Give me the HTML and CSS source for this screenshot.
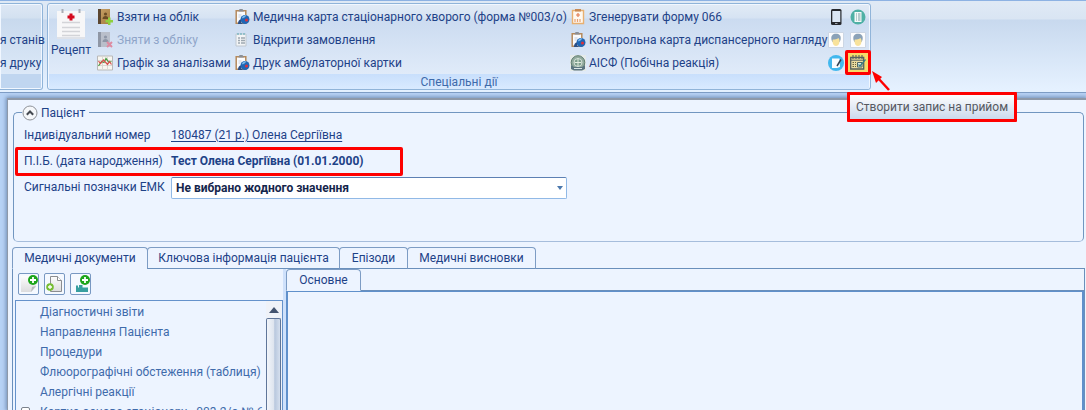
FILE: index.html
```html
<!DOCTYPE html>
<html lang="uk">
<head>
<meta charset="utf-8">
<title>Пацієнт</title>
<link rel="stylesheet" href="styles.css">
</head>
<body>
<svg class="defs" aria-hidden="true">
  <defs>
    <linearGradient id="paper" x1="0" y1="0" x2="0" y2="1"><stop offset="0" stop-color="#fdfdfd"/><stop offset="1" stop-color="#dcdcde"/></linearGradient>
    <linearGradient id="leather" x1="0" y1="0" x2="1" y2="1"><stop offset="0" stop-color="#c9a268"/><stop offset="1" stop-color="#a57b3f"/></linearGradient>
  </defs>
  <symbol id="i-clip" viewBox="0 0 16 16">
    <path d="M2.200 1.800h9.600v12.400H2.200z" fill="#fafbfd" stroke="#b58a5c" stroke-width="1.500"/>
    <path d="M4.500 2.500 5.500 0h3l1.500 2.500z" fill="#8b8f96"/>
    <path d="M4.500 6h3M4.500 8h2" stroke="#c5cede"/>
    <circle cx="11" cy="10.500" r="4.500" fill="#1f66b5"/>
    <path d="M8 8.500c1-2 3-2.500 4.500-2L10.500 8.500 8.500 9.500z" fill="#7db9ea"/>
    <path d="M4 15c0-3 1-4.500 3-4.500v3L9 15z" fill="#2b4f86"/>
    <circle cx="12.500" cy="11" r="1.600" fill="#d8323c"/>
  </symbol>
  <symbol id="i-face" viewBox="0 0 16 16">
    <path d="M.5.5h15v15H.5z" fill="#fdfdfe" stroke="#ccd6e4"/>
    <path d="M3.500 8C2.500 3.500 5 1.800 8 1.800S13.500 3.500 12.500 8L11.500 10h-7z" fill="#8ba2b8"/>
    <path d="M5 7.500c2 0 4-.5 5.500-1.500l1 2c.3 3-1 6-3.500 6s-3.700-3-3.500-6z" fill="#f8e29b"/>
  </symbol>
</svg>

<header class="ribbon">
  <section class="group group-cut">
    <div class="group-body">
      <button class="cmd"><span>я станів</span></button>
      <button class="cmd"><span>я друку</span></button>
    </div>
    <div class="group-title"></div>
  </section>

  <section class="group group-special">
    <div class="group-body">
      <button class="big">
        <svg viewBox="0 0 28 30"><path d="M0 2h28v28H0z" fill="#dfe2e8"/><path d="M0 2h28v26H0z" fill="#f7f7f8"/><path d="M5.500 0v4M22.500 0v4" stroke="#a9adb4" stroke-width="2"/><path d="M12.500 4.500h3v2h2v3h-2v2h-3v-2h-2v-3h2z" fill="#d4081c"/><path d="M5 13.500h18M5 18.500h18M5 22.500h18M5 26.500h18" stroke="#d3d4d8" stroke-width="1.500"/></svg>
        <span>Рецепт</span>
      </button>
      <div class="col col-a">
        <button class="cmd"><svg viewBox="0 0 16 16"><path d="M1 0h12v15H1z" fill="url(#leather)"/><path d="M1 0h3v15H1z" fill="#5b4630"/><circle cx="8.500" cy="5" r="1.600" fill="#6b4c25"/><path d="M5.500 10c0-4 6-4 6 0z" fill="#6b4c25"/><path d="M11 8.500h2.500V11H16v2.500h-2.500V16H11v-2.500H8.500V11H11z" fill="#8ed03e"/></svg><span>Взяти на облік</span></button>
        <button class="cmd" disabled><svg viewBox="0 0 16 16"><path d="M1 0h12v15H1z" fill="#b9bfca"/><path d="M1 0h3v15H1z" fill="#8f97a5"/><circle cx="8.500" cy="5" r="1.600" fill="#8e97a7"/><path d="M5.500 10c0-4 6-4 6 0z" fill="#8e97a7"/><path d="m10 10 5 5m0-5-5 5" stroke="#dd8ba1" stroke-width="2"/></svg><span>Зняти з обліку</span></button>
        <button class="cmd"><svg viewBox="0 0 16 16"><path d="M.5 1h15v14H.5z" fill="#f8f6f0" stroke="#b9b9b9"/><path d="M1 5.500h14M1 10.500h14M5.500 1v14M10.500 1v14" stroke="#dad9d3"/><path d="m1.500 11 3-4.500 2.500 1 2-4 3 4 2.500-1" fill="none" stroke="#4a9c43" stroke-width="1.200"/><path d="m1.500 6 2 2.500L6.500 5l4 4.500 2-3 2 3" fill="none" stroke="#d9534f" stroke-width="1.200"/></svg><span>Графік за аналізами</span></button>
      </div>
      <div class="col col-b">
        <button class="cmd"><svg><use href="#i-clip"/></svg><span>Медична карта стаціонарного хворого (форма №003/о)</span></button>
        <button class="cmd"><svg viewBox="0 0 16 16"><path d="M2 4V2h10v12H2z" fill="#f2f4f6" stroke="#c0c8d0"/><path d="M4 1v2M7 1v2M10 1v2" stroke="#55a6b3"/><path d="M4 6h2M7 6h4M4 8.500h2M7 8.500h4M4 11h2M7 11h4" stroke="#9ea8b1" stroke-width="1.300"/></svg><span>Відкрити замовлення</span></button>
        <button class="cmd"><svg><use href="#i-clip"/></svg><span>Друк амбулаторної картки</span></button>
      </div>
      <div class="col col-c">
        <button class="cmd"><svg viewBox="0 0 16 16"><path d="M2.500 1.500h11v13h-11z" fill="#fff9f0" stroke="#e8b070" stroke-width="1.400"/><path d="M5 0h6v2.500H5z" fill="#c98a54"/><path d="M8 4v4M6 6h4" stroke="#e27d55" stroke-width="1.200"/><path d="M5 10v3M7.500 10v3M10 10v3" stroke="#e7a074" stroke-width="1.200"/></svg><span>Згенерувати форму 066</span></button>
        <button class="cmd"><svg><use href="#i-clip"/></svg><span>Контрольна карта диспансерного нагляду</span></button>
        <button class="cmd"><svg viewBox="0 0 16 16"><path d="M0 0h16v16H0z" fill="#e5ebe9"/><circle cx="8" cy="7.500" r="6.800" fill="#91aa9c" stroke="#607c70"/><circle cx="8" cy="7.500" r="4" fill="#7d9e8c" stroke="#d4e0d8"/><path d="M8 3.500v8M4.500 7.500h7" stroke="#e2ecdf"/><path d="m1 10 3 2h8l3-2v4l-3 1.500H4L1 14z" fill="#5b7580"/><path d="M4 13.500h8" stroke="#dbe6e5"/></svg><span>АІСФ (Побічна реакція)</span></button>
      </div>
      <div class="icons">
        <button class="tool" aria-label="Телефон"><svg viewBox="0 0 16 16"><rect x="3" y="0" width="10.500" height="16" rx="1.500" fill="#26282d"/><path d="M4.300 2h8v11h-8z" fill="#dbe6f4"/><path d="M7 14.500h2.500" stroke="#9ca3ad"/></svg></button>
        <button class="tool" aria-label="Список"><svg viewBox="0 0 16 16"><circle cx="8" cy="8" r="7.500" fill="#4fb0a5"/><path d="M4.500 3h7v10h-7z" fill="#f4faf9"/><path d="M6 5h1M8 5h2.500M6 7h1M8 7h2.500M6 9h1M8 9h2.500M6 11h1M8 11h2.500" stroke="#789da3"/></svg></button>
        <button class="tool" aria-label="Пацієнт"><svg><use href="#i-face"/></svg></button>
        <button class="tool" aria-label="Пацієнтка"><svg><use href="#i-face"/></svg></button>
        <button class="tool" aria-label="Редагувати"><svg viewBox="0 0 16 16"><circle cx="8" cy="8" r="8" fill="#42b8ee"/><path d="M4 3.500h7.500L12 12l-3 1H4z" fill="#fbfcfe"/><path d="m13 4.500-4 6.500" stroke="#344252" stroke-width="1.500"/></svg></button>
        <button class="tool tool-hot" aria-label="Створити запис на прийом"><svg viewBox="0 0 16 16"><path d="M.7 2.500h13v11.500H.7z" fill="#ecdca0" stroke="#54605f" stroke-width="1.300"/><path d="M1 5.200h13" stroke="#54605f"/><path d="M3 0v4M6 0v4M9 0v4M12 0v4" stroke="#59615e" stroke-width="1.100"/><path d="M2.500 7.500h1.500M5 7.500h1M2.500 9.500h1.500M5 9.500h1M2.500 11.500h1.500M5 11.500h1" stroke="#66633f" stroke-width="1.200"/><path d="M7.500 7.500h4.500v4.500H7.500z" fill="#dff0e8" stroke="#4e6666"/><path d="m8.500 9.500 1.500 1.500 5.500-6.500" fill="none" stroke="#397d84" stroke-width="1.200"/></svg>
          <span class="mark mark-tool"></span>
          <svg class="arrow" viewBox="0 0 20 20"><path d="M18 19 7 7" stroke="#fe0000" stroke-width="2.500"/><path d="M1 0 11 6 5 12z" fill="#fe0000"/></svg>
          <span class="tip" role="tooltip">Створити запис на прийом</span>
        </button>
      </div>
    </div>
    <div class="group-title">Спеціальні дії</div>
  </section>
</header>

<main class="window">
  <section class="patient">
    <div class="legend">
      <button class="fold" aria-label="Згорнути"><svg viewBox="0 0 16 16"><circle cx="8" cy="8" r="7" fill="#f5f7fa" stroke="#8f9399"/><path d="m4.800 9.800 3.200-3.300 3.200 3.300" fill="none" stroke="#444950" stroke-width="2"/></svg></button>
      <span>Пацієнт</span>
    </div>
    <div class="rows">
      <span>Індивідуальний номер</span>
      <a href="#patient">180487 (21 р.) Олена Сергіївна</a>
      <span>П.І.Б. (дата народження)</span>
      <strong>Тест Олена Сергіївна (01.01.2000)<i class="mark mark-name"></i></strong>
      <label for="signals">Сигнальні позначки ЕМК</label>
      <div class="pick"><select id="signals"><option>Не вибрано жодного значення</option></select></div>
    </div>
  </section>

  <nav class="tabs">
    <button class="tab tab-on tab-docs">Медичні документи</button>
    <button class="tab tab-key">Ключова інформація пацієнта</button>
    <button class="tab tab-ep">Епізоди</button>
    <button class="tab tab-con">Медичні висновки</button>
  </nav>

  <div class="split">
    <aside class="left">
      <div class="toolbar">
        <button aria-label="Новий документ"><svg viewBox="0 0 18 18"><path d="M1 1h15v11l-5 5H1z" fill="url(#paper)"/><path d="m11 17 1-5 4-1z" fill="#b7babd"/><circle cx="13" cy="5" r="5" fill="#1da51b"/><path d="M13 2v6M10 5h6" stroke="#fff" stroke-width="1.800"/></svg></button>
        <button aria-label="Додати файл"><svg viewBox="0 0 18 18"><path d="M4.500 1.500h7l4 4v11h-11z" fill="url(#paper)" stroke="#8b8d90"/><path d="M11.500 1.500v4h4" fill="#fff" stroke="#8b8d90"/><circle cx="4" cy="12" r="3.800" fill="#76bd33"/><path d="M4 10v4M2 12h4" stroke="#fff" stroke-width="1.300"/></svg></button>
        <button aria-label="Додати госпіталізацію"><svg viewBox="0 0 18 18"><path d="M4 10.500h2v2h10v4.500H4z" fill="#379fa0"/><path d="M7 10h3.500v3H7z" fill="#379fa0"/><circle cx="13" cy="5" r="5" fill="#1da51b"/><path d="M13 2v6M10 5h6" stroke="#fff" stroke-width="1.800"/></svg></button>
      </div>
      <div class="listbox">
        <ul class="tree">
          <li>Діагностичні звіти</li>
          <li>Направлення Пацієнта</li>
          <li>Процедури</li>
          <li>Флюорографічні обстеження (таблиця)</li>
          <li>Алергічні реакції</li>
          <li><button class="expand" aria-label="Розгорнути"></button>Картка-основа стаціонару - 003-2/о № 6</li>
        </ul>
        <div class="scroll"><button class="up" aria-label="Вгору"><svg viewBox="0 0 10 6"><path d="m0 6 5-6 5 6z" fill="#43536f"/></svg></button><div class="thumb"></div></div>
      </div>
    </aside>
    <section class="right">
      <nav class="subtabs"><button class="tab tab-on tab-main">Основне</button></nav>
      <div class="canvas"></div>
    </section>
  </div>
</main>
</body>
</html>
```

FILE: styles.css
```css
* { box-sizing: border-box; }

body {
  margin: 0;
  height: 100vh;
  overflow: hidden;
  display: flex;
  flex-direction: column;
  background: #b7d2f5;
  color: #1e4287;
  font: 12px/20px Roboto, "Noto Sans", sans-serif;
}

button { margin: 0; padding: 0; border: 0; background: none; color: inherit; font: inherit; }
.defs { position: absolute; width: 0; height: 0; }

/* Ribbon */
.ribbon {
  flex: none;
  display: flex;
  gap: 4px;
  height: 93px;
  padding-top: 2px;
  border-top: 1px solid #8db2e3;
  border-bottom: 1px solid #7e9cc5;
  background: linear-gradient(#dfe9f5 0 3px, #d9e5f3 18px, #c8d9ee 19px, #e5f1ff 88px);
}
.group {
  display: flex;
  flex-direction: column;
  height: 87px;
  border: 1px solid #90b4d9;
  border-radius: 3px;
  box-shadow: inset 0 0 0 1px #f1f7ff;
  background: linear-gradient(#dee8f5, #d3e1f0 14px, #c8d9ed 15px, #dce9f8 70px);
}
.group-cut { width: 43px; border-left: 0; border-radius: 0 3px 3px 0; }
.group-cut .group-body { flex-direction: column; padding-top: 24px; }
.group-special { width: 824px; background: linear-gradient(#e2ebf6, #d6e3f3 14px, #cbdbf0 15px, #e0ebf9 70px); }
.group-body { display: flex; height: 70px; }
.group-title {
  height: 15px;
  margin: 0 1px 1px;
  line-height: 17px;
  text-align: center;
  color: #3e6aaa;
  background: linear-gradient(#c8dffc, #d9eaff);
}
.group-cut .group-title { background: #c0d6f0; }

.cmd { display: flex; align-items: center; gap: 4px; height: 23px; white-space: nowrap; }
.cmd svg { width: 16px; height: 16px; flex: none; }
.cmd:disabled { color: #8fa5c9; }
.big { display: flex; flex-direction: column; align-items: center; width: 40px; padding-top: 5px; margin-left: 3px; }
.big svg { width: 28px; height: 30px; }
.big span { line-height: 22px; }
.col { padding-top: 1px; }
.col-a { width: 137px; margin-left: 6px; }
.col-b { width: 336px; }
.col-c { width: 258px; }
.col-b .cmd, .col-c .cmd { gap: 3px; }
.icons { display: grid; grid-template-columns: 22px 22px; grid-auto-rows: 23px; margin-left: -2px; padding-top: 1px; }
.tool { position: relative; display: grid; place-items: center; width: 20px; height: 23px; }
.tool > svg:first-child { width: 16px; height: 16px; }
.tool-hot { background: #f5da6a; }

/* Call-outs */
.mark { position: absolute; border: 3px solid #fe0000; border-radius: 2px; pointer-events: none; }
.mark-tool { inset: -1px -3px; }
.arrow { position: absolute; left: 23px; top: 20px; width: 20px; height: 20px; z-index: 2; }
.tip {
  position: absolute;
  left: -1px;
  top: 41px;
  z-index: 2;
  padding: 2px 6px;
  border: 3px solid #fe0000;
  border-radius: 1px;
  background: linear-gradient(#fdfdfe, #cbd9ed);
  color: #565860;
  line-height: 20px;
  white-space: nowrap;
}

/* Document window */
.window {
  flex: 1;
  min-height: 0;
  display: flex;
  flex-direction: column;
  margin: 5px 0 0 7px;
  padding: 6px 1px 0 4px;
  border: solid #8e99a9;
  border-width: 2px 0 0 1px;
  background: #edf4ff;
  box-shadow: 0 0 4px 1px #6f8bb3;
}
.patient {
  flex: none;
  height: 136px;
  margin: 0 1px 5px;
}
.legend { display: flex; align-items: center; height: 14px; }
.legend::before { content: ""; align-self: flex-end; width: 8px; height: 7px; border: solid #7196c0; border-width: 1px 0 0 1px; border-radius: 5px 0 0; }
.legend::after { content: ""; flex: 1; align-self: flex-end; height: 7px; margin-left: 4px; border: solid #7196c0; border-width: 1px 1px 0 0; border-radius: 0 5px 0 0; }
.fold { width: 16px; height: 16px; margin-right: 3px; }
.fold svg { display: block; width: 16px; height: 16px; }
.rows {
  display: grid;
  grid-template-columns: 147px 396px;
  grid-auto-rows: 26px;
  align-items: center;
  height: 122px;
  padding: 2px 10px 0;
  border: solid #7196c0;
  border-width: 0 1px 1px;
  border-bottom-color: #a6bddc;
  border-radius: 0 0 5px 5px;
}
.rows a { color: inherit; text-underline-offset: 2px; }
.rows strong { position: relative; white-space: nowrap; }
.mark-name { left: -156px; top: -4px; width: 388px; height: 29px; }
.pick { position: relative; padding-top: 2px; }
.pick::after { content: ""; position: absolute; right: 4px; top: 11px; border: 3px solid transparent; border-top: 4px solid #4b78ad; }
.pick select {
  display: block;
  width: 100%;
  height: 22px;
  padding: 0 4px;
  appearance: none;
  border: 1px solid #91b9e6;
  border-top-color: #5d80b3;
  border-radius: 2px;
  background: #fff;
  color: #14254b;
  font: bold 12px/20px Roboto, "Noto Sans", sans-serif;
}

/* Tabs */
.tabs, .subtabs { flex: none; display: flex; height: 22px; box-shadow: inset 0 -1px #6a8fbb; }
.tab {
  height: 22px;
  margin-right: -1px;
  border: 1px solid #7d9cc4;
  border-radius: 4px 4px 0 0;
  border-bottom-color: #6a8fbb;
  background: #edf4ff;
  white-space: nowrap;
}
.tab-on { border-bottom-color: #edf4ff; }
.tab-docs { width: 136px; }
.tab-key { width: 193px; }
.tab-ep { width: 69px; }
.tab-con { width: 129px; }
.tab-main { width: 75px; }

.split { flex: 1; min-height: 0; display: flex; border: solid #6a8fbb; border-width: 0 1px; }
.left { flex: none; display: flex; flex-direction: column; width: 273px; padding-left: 2px; border-right: 3px solid #cfe1fb; }
.toolbar { display: flex; gap: 5px; padding: 4px 3px 5px; }
.toolbar button { display: grid; place-items: center; width: 21px; height: 22px; border: 1px solid #7898c2; border-radius: 2px; background: #f5f9ff; }
.toolbar svg { width: 18px; height: 18px; }
.listbox { flex: 1; min-height: 0; display: flex; border: 1px solid #6592cb; border-bottom: 0; overflow: hidden; }
.tree { flex: 1; min-width: 0; margin: 0; padding: 1px 0 0 24px; list-style: none; color: #3f6bab; white-space: nowrap; overflow: hidden; }
.tree li { position: relative; height: 20px; }
.expand { position: absolute; left: -19px; top: 5px; width: 9px; height: 9px; border: 1px solid #7b828d; border-radius: 2px; background: #fff; }
.scroll { flex: none; display: flex; flex-direction: column; width: 16px; padding-right: 1px; background: #eff2f8; }
.up { display: grid; place-items: center; height: 17px; }
.up svg { width: 10px; height: 6px; }
.thumb { flex: 1; border: 1px solid #5f7599; border-bottom: 0; border-radius: 2px 2px 0 0; background: linear-gradient(90deg, #f2f5fa, #dfe5ef 50%, #b9c8de 60%, #d5dfee); }
.right { flex: 1; min-width: 0; display: flex; flex-direction: column; }
.canvas { flex: 1; border: solid #6090cb; border-width: 1px 2px 0; }
```
